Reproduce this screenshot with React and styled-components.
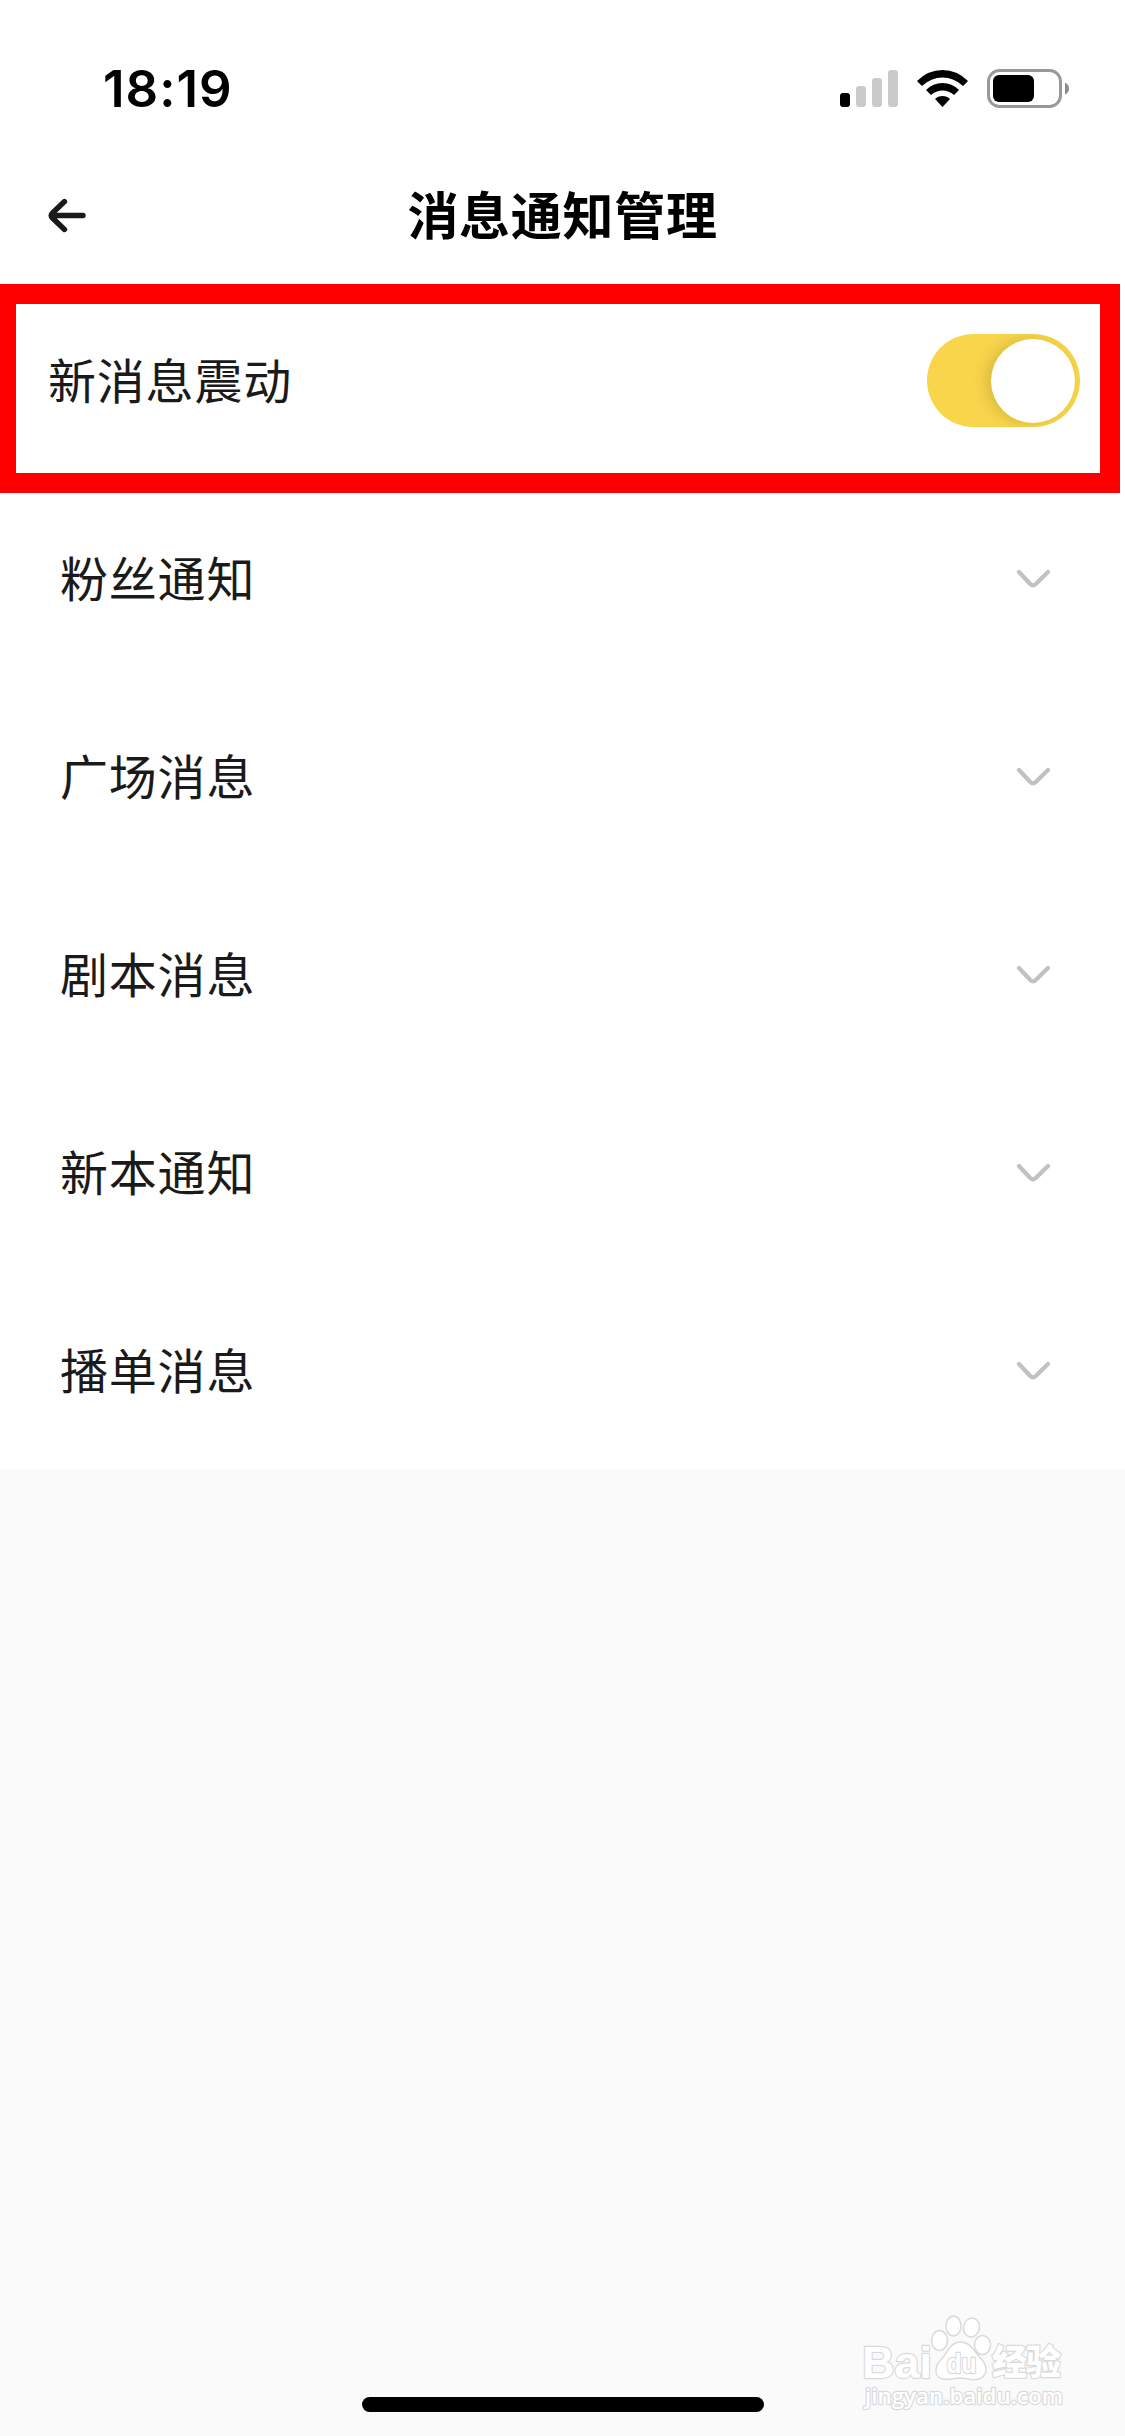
import React from "react";
import styled, { createGlobalStyle } from "styled-components";

const GlobalStyle = createGlobalStyle`
  * { box-sizing: border-box; }
  html, body { margin: 0; padding: 0; background: #fafafa; }
  body {
    font-family: "Liberation Sans", "Noto Sans CJK SC", sans-serif;
    color: #1a1a1a;
  }
`;

const Screen = styled.main`
  position: relative;
  display: flex;
  flex-direction: column;
  width: 1125px;
  height: 2436px;
  overflow: hidden;
  background: #fafafa;
`;

const StatusBar = styled.header`
  display: flex;
  justify-content: space-between;
  align-items: center;
  height: 150px;
  padding: 28px 55px 0 103px;
  background: #fff;
`;

const Clock = styled.time`
  font: 600 51px/60px Inter, sans-serif;
  letter-spacing: 1px;
  color: #000;
`;

const StatusIcons = styled.div`
  display: flex;
  align-items: center;
  gap: 19px;
  svg { display: block; }
`;

const NavBar = styled.nav`
  display: grid;
  grid-template-columns: 120px 1fr 120px;
  align-items: center;
  height: 132px;
  background: #fff;
`;

const BackButton = styled.button`
  display: flex;
  padding: 0 0 0 46px;
  border: 0;
  background: none;
`;

const Title = styled.h1`
  margin: 0;
  padding-bottom: 6px;
  font: 700 51px/60px "Noto Sans CJK SC", sans-serif;
  letter-spacing: 0.7px;
  text-align: center;
  color: #000;
`;

const List = styled.section`
  display: flex;
  flex-direction: column;
  background: #fff;
`;

const Row = styled.div`
  display: flex;
  align-items: center;
  justify-content: space-between;
  height: 198px;
  padding: ${(p) => (p.$inset ? "0 74px 0 60px" : "0 45px 1px 48px")};
`;

const Label = styled.span`
  padding-bottom: 6px;
  font: 400 48px/60px "Noto Sans CJK SC", sans-serif;
  letter-spacing: 0.8px;
`;

const Toggle = styled.button`
  display: flex;
  justify-content: flex-end;
  align-items: center;
  width: 153px;
  height: 93px;
  padding: 0 5px;
  border: 0;
  border-radius: 47px;
  overflow: hidden;
  background: #f8d54b;
`;

const Knob = styled.span`
  width: 84px;
  height: 84px;
  border-radius: 50%;
  background: #fff;
  box-shadow: -5px 0 14px rgba(80, 60, 0, 0.18);
`;

const Highlight = styled.div`
  position: absolute;
  left: -4px;
  top: 284px;
  width: 1124px;
  height: 209px;
  border: 20px solid #f00;
  pointer-events: none;
`;

const HomeIndicator = styled.div`
  width: 402px;
  height: 15px;
  margin: auto 0 24px 362px;
  border-radius: 8px;
  background: #000;
`;

const Watermark = styled.svg`
  position: absolute;
  left: 855px;
  top: 2308px;
  text {
    fill: #fff;
    stroke: #dadada;
    stroke-width: 2.4px;
    paint-order: stroke;
    stroke-linejoin: round;
  }
`;

const Signal = () => (
  <svg width="58" height="40" viewBox="0 0 58 40">
    <rect x="0" y="24" width="10" height="14" rx="3" fill="#000" />
    <rect x="16" y="17" width="10" height="21" rx="3" fill="#cacaca" />
    <rect x="32" y="9" width="10" height="29" rx="3" fill="#cacaca" />
    <rect x="48" y="1" width="10" height="37" rx="3" fill="#cacaca" />
  </svg>
);

const Wifi = () => (
  <svg width="51" height="40" viewBox="0 0 51 40">
    <path d="M0 12Q11 1 25.500 1T51 12L46 17Q37 8.500 25.500 8.500T5 17Z" />
    <path d="M9 21Q16 14 25.500 14T42 21L37 26Q32 21.500 25.500 21.500T14 26Z" />
    <path d="M18 30Q21 27 25.500 27T33 30L25.500 38Z" />
  </svg>
);

const Battery = () => (
  <svg width="83" height="40" viewBox="0 0 83 40">
    <rect x="1.500" y="1.500" width="72" height="36" rx="11" fill="none" stroke="#999" strokeWidth="3" />
    <rect x="6" y="6" width="41" height="27" rx="6" fill="#000" />
    <path d="M78 13.500Q82 15.500 82 19.500T78 25.500Z" fill="#8c8c8c" />
  </svg>
);

const BackArrow = () => (
  <svg width="42" height="36" viewBox="0 0 42 36" fill="none" stroke="#1a1a1a" strokeWidth="5.400" strokeLinecap="round" strokeLinejoin="round">
    <path d="M18.500 3.500L6.500 15Q4 17.500 6.500 20L18.500 31.500M6 17.500H37" />
  </svg>
);

const Chevron = () => (
  <svg width="36" height="22" viewBox="0 0 36 22" fill="none" stroke="#c2c0c0" strokeWidth="4.200" strokeLinecap="round" strokeLinejoin="round">
    <path d="M4 4L15.500 16.200Q18 18.500 20.500 16.200L33 4" />
  </svg>
);

const BaiduMark = () => (
  <Watermark width="220" height="112" viewBox="0 0 220 112">
    <text x="7" y="70" fontFamily="Liberation Sans, sans-serif" fontWeight="700" fontSize="45" textLength="70" lengthAdjust="spacingAndGlyphs">Bai</text>
    <g fill="#fff" stroke="#dadada" strokeWidth="1.500">
      <ellipse cx="84.500" cy="32.500" rx="8" ry="10" />
      <ellipse cx="98.500" cy="18" rx="7.500" ry="10" />
      <ellipse cx="116.500" cy="19.500" rx="8" ry="9.500" transform="rotate(12 116.500 19.500)" />
      <ellipse cx="127.500" cy="37" rx="8" ry="9.500" />
      <path d="M105.500 34C98 34 94 40 89 48C84 54 80 58 81 64C82 71 88 72 95 71C102 70 109 70 116 71.500C124 73 131 69 131 61C131 54 126 51 122 46C117 39 113 34 105.500 34Z" />
    </g>
    <text x="91.500" y="65" fontFamily="Liberation Sans, sans-serif" fontWeight="700" fontSize="28" textLength="30" lengthAdjust="spacingAndGlyphs">du</text>
    <text x="137" y="67" fontFamily="Noto Sans CJK SC, sans-serif" fontWeight="900" fontSize="35" textLength="69">经验</text>
    <text x="10" y="96" fontFamily="Open Sans, Noto Sans, sans-serif" fontWeight="600" fontSize="22" textLength="198" lengthAdjust="spacingAndGlyphs">jingyan.baidu.com</text>
  </Watermark>
);

const groups = ["粉丝通知", "广场消息", "剧本消息", "新本通知", "播单消息"];

export default function App() {
  return (
    <>
      <GlobalStyle />
      <Screen>
        <StatusBar>
          <Clock>18:19</Clock>
          <StatusIcons>
            <Signal />
            <Wifi />
            <Battery />
          </StatusIcons>
        </StatusBar>
        <NavBar>
          <BackButton><BackArrow /></BackButton>
          <Title>消息通知管理</Title>
        </NavBar>
        <List>
          <Row>
            <Label>新消息震动</Label>
            <Toggle><Knob /></Toggle>
          </Row>
          {groups.map((name) => (
            <Row key={name} $inset>
              <Label>{name}</Label>
              <Chevron />
            </Row>
          ))}
        </List>
        <HomeIndicator />
        <Highlight />
        <BaiduMark />
      </Screen>
    </>
  );
}
